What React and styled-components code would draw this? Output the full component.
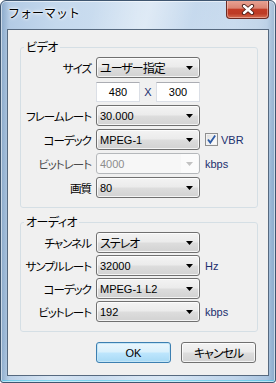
import React from "react";
import styled, { createGlobalStyle } from "styled-components";

const GlobalStyle = createGlobalStyle`
  html, body {
    margin: 0;
    padding: 0;
    background: #ffffff;
  }
  body {
    font-family: "Noto Sans CJK JP", "Liberation Sans", sans-serif;
  }
`;

const jp = `"Noto Sans CJK JP", "Liberation Sans", sans-serif`;
const latin = `"Liberation Sans", "Noto Sans CJK JP", sans-serif`;

function Arrow({ disabled }) {
  return (
    <svg width="7" height="4" viewBox="0 0 7 4">
      <path d="M0 0 H7 L3.5 4 Z" fill={disabled ? "#c2c2c2" : "#000"} />
    </svg>
  );
}

function Combo({ value, latinText, disabled }) {
  return (
    <ComboBox $disabled={disabled}>
      <ComboText $latin={latinText} $disabled={disabled}>
        {value}
      </ComboText>
      <ArrowSlot $disabled={disabled}>
        <Arrow disabled={disabled} />
      </ArrowSlot>
    </ComboBox>
  );
}

function App() {
  return (
    <>
      <GlobalStyle />
      <Frame>
        <TitleBar>
          <Title>フォーマット</Title>
          <CloseButton>
            <svg width="14" height="11" viewBox="0 0 14 11">
              <path
                d="M3 2 L11 9 M11 2 L3 9"
                stroke="#4a1d17"
                strokeWidth="4.2"
                strokeLinecap="round"
              />
              <path
                d="M3 2 L11 9 M11 2 L3 9"
                stroke="#ffffff"
                strokeWidth="2.4"
                strokeLinecap="round"
              />
            </svg>
          </CloseButton>
        </TitleBar>
        <Client>
          <Group>
            <Legend>ビデオ</Legend>
            <Rows>
              <Label>サイズ</Label>
              <Combo value="ユーザー指定" />
              <span />

              <span />
              <SizePair>
                <NumBox>480</NumBox>
                <Times>X</Times>
                <NumBox>300</NumBox>
              </SizePair>
              <span />

              <Label>フレームレート</Label>
              <Combo value="30.000" latinText />
              <span />

              <Label>コーデック</Label>
              <Combo value="MPEG-1" latinText />
              <Check>
                <CheckBox>
                  <svg width="11" height="11" viewBox="0 0 11 11">
                    <path
                      d="M2 5.5 L4.3 8.6 L9.2 1.6"
                      fill="none"
                      stroke="#2d5ba6"
                      strokeWidth="1.8"
                    />
                  </svg>
                </CheckBox>
                <Unit>VBR</Unit>
              </Check>

              <Label $dim>ビットレート</Label>
              <Combo value="4000" latinText disabled />
              <Unit>kbps</Unit>

              <Label>画質</Label>
              <Combo value="80" latinText />
              <span />
            </Rows>
          </Group>

          <Group $gapTop>
            <Legend>オーディオ</Legend>
            <Rows $tight>
              <Label>チャンネル</Label>
              <Combo value="ステレオ" />
              <span />

              <Label>サンプルレート</Label>
              <Combo value="32000" latinText />
              <Unit>Hz</Unit>

              <Label>コーデック</Label>
              <Combo value="MPEG-1 L2" latinText />
              <span />

              <Label>ビットレート</Label>
              <Combo value="192" latinText />
              <Unit>kbps</Unit>
            </Rows>
          </Group>

          <Buttons>
            <Button $default>OK</Button>
            <Button>キャンセル</Button>
          </Buttons>
        </Client>
      </Frame>
    </>
  );
}
export default App;

const Frame = styled.div`
  width: 276px;
  height: 383px;
  box-sizing: border-box;
  display: flex;
  flex-direction: column;
  padding: 0 6px 6px 6px;
  border: 1px solid #3f5670;
  border-radius: 6px 6px 3px 3px;
  box-shadow: inset 0 0 0 1px rgba(255, 255, 255, 0.55),
    inset 0 -2px 0 0 rgba(70, 200, 235, 0.6);
  background-image: linear-gradient(
      105deg,
      rgba(255, 255, 255, 0) 25%,
      rgba(255, 255, 255, 0.35) 40%,
      rgba(255, 255, 255, 0) 52%,
      rgba(255, 255, 255, 0.25) 70%,
      rgba(255, 255, 255, 0) 85%
    ),
    linear-gradient(
      90deg,
      #8aa9ca 0%,
      #b3cbe5 3%,
      #c4d8ed 20%,
      #cfe0f1 50%,
      #c0d5eb 85%,
      #abc5e0 97%,
      #8aa9ca 100%
    );
  overflow: hidden;
`;

const TitleBar = styled.div`
  height: 28px;
  display: flex;
  align-items: flex-start;
  justify-content: space-between;
`;

const Title = styled.div`
  margin: 4px 0 0 1px;
  font-family: ${jp};
  font-size: 12px;
  line-height: 16px;
  color: #000;
  text-shadow: 0 0 5px #fff, 0 0 3px #fff, 0 0 2px #fff;
`;

const CloseButton = styled.div`
  width: 43px;
  height: 19px;
  margin-top: -1px;
  box-sizing: border-box;
  display: flex;
  align-items: center;
  justify-content: center;
  border: 1px solid #6b2a22;
  border-top: none;
  border-radius: 0 0 4px 4px;
  background: linear-gradient(
    180deg,
    #e9a596 0%,
    #db8573 45%,
    #c23c26 52%,
    #bd3b25 75%,
    #d46c50 100%
  );
  box-shadow: inset 0 0 0 1px rgba(255, 220, 210, 0.45);
`;

const Client = styled.div`
  flex: 1;
  display: flex;
  flex-direction: column;
  border: 1px solid #56697f;
  background: #f0f0f0;
  padding: 10px 10px 0 12px;
`;

const Group = styled.fieldset`
  margin: ${(p) => (p.$gapTop ? "7px" : "0")} 0 0 0;
  padding: 3px 0 9px 0;
  border: 1px solid #d5dfe5;
  border-radius: 3px;
  min-width: 0;
`;

const Legend = styled.legend`
  margin-left: 3px;
  padding: 0 2px;
  font-family: ${jp};
  font-feature-settings: "palt";
  font-size: 12px;
  line-height: 14px;
  letter-spacing: -0.5px;
  color: #000;
`;

const Rows = styled.div`
  display: grid;
  grid-template-columns: 70px 104px auto;
  grid-auto-rows: 21px;
  column-gap: 5px;
  row-gap: ${(p) => (p.$tight ? "2px" : "3px")};
  align-items: center;
`;

const Label = styled.div`
  text-align: right;
  font-family: ${jp};
  font-feature-settings: "palt";
  font-size: 11.5px;
  line-height: 16px;
  letter-spacing: -1px;
  white-space: nowrap;
  color: ${(p) => (p.$dim ? "#4a4a4a" : "#000")};
`;

const ComboBox = styled.div`
  height: 21px;
  box-sizing: border-box;
  display: flex;
  align-items: center;
  border: 1px solid ${(p) => (p.$disabled ? "#b5b8bb" : "#707070")};
  border-radius: 3px;
  background: ${(p) =>
    p.$disabled
      ? "#f7f7f7"
      : "linear-gradient(180deg, #f3f3f3 0%, #ebebeb 48%, #dddddd 52%, #d2d2d2 100%)"};
  box-shadow: ${(p) =>
    p.$disabled ? "none" : "inset 0 0 0 1px rgba(255,255,255,0.75)"};
`;

const ComboText = styled.div`
  flex: 1;
  padding-left: 3px;
  font-family: ${(p) => (p.$latin ? latin : jp)};
  font-feature-settings: "palt";
  font-size: ${(p) => (p.$latin ? "11px" : "12px")};
  letter-spacing: ${(p) => (p.$latin ? "0" : "-1px")};
  line-height: 16px;
  white-space: nowrap;
  color: ${(p) => (p.$disabled ? "#8d8d8d" : "#000")};
`;

const ArrowSlot = styled.div`
  width: 17px;
  height: 100%;
  display: flex;
  align-items: center;
  justify-content: center;
  margin-right: 1px;
  background: ${(p) => (p.$disabled ? "#fbfbfb" : "transparent")};
`;

const SizePair = styled.div`
  display: flex;
  align-items: center;
  justify-content: space-between;
`;

const NumBox = styled.div`
  width: 44px;
  height: 20px;
  box-sizing: border-box;
  display: flex;
  align-items: center;
  justify-content: center;
  background: #fff;
  border: 1px solid #dbdfe6;
  border-top-color: #abadb3;
  font-family: ${latin};
  font-size: 11px;
  color: #000;
`;

const Times = styled.span`
  font-family: ${latin};
  font-size: 11px;
  color: #1c2f6e;
`;

const Check = styled.div`
  display: flex;
  align-items: center;
  gap: 3px;
`;

const CheckBox = styled.div`
  width: 13px;
  height: 13px;
  box-sizing: border-box;
  display: flex;
  align-items: center;
  justify-content: center;
  border: 1px solid #8f8f8f;
  background: linear-gradient(135deg, #dcdcdc 0%, #f4f4f4 60%, #ffffff 100%);
  box-shadow: inset 0 0 0 1px #f2f2f2;
`;

const Unit = styled.span`
  font-family: ${latin};
  font-size: 11px;
  color: #1c2f6e;
  white-space: nowrap;
`;

const Buttons = styled.div`
  display: flex;
  justify-content: flex-end;
  gap: 10px;
  margin: 10px 2px 0 0;
`;

const Button = styled.div`
  width: 75px;
  height: 21px;
  box-sizing: border-box;
  display: flex;
  align-items: center;
  justify-content: center;
  border: 1px solid ${(p) => (p.$default ? "#3c7fb1" : "#707070")};
  border-radius: 3px;
  background: ${(p) =>
    p.$default
      ? "linear-gradient(180deg, #eaf6fd 0%, #d9f0fc 48%, #bee6fd 52%, #a7d9f5 100%)"
      : "linear-gradient(180deg, #f3f3f3 0%, #ebebeb 48%, #dddddd 52%, #d2d2d2 100%)"};
  box-shadow: ${(p) =>
    p.$default
      ? "inset 0 0 0 1px #c4e5f6"
      : "inset 0 0 0 1px rgba(255,255,255,0.75)"};
  font-family: ${(p) => (p.$default ? latin : jp)};
  font-feature-settings: "palt";
  font-size: ${(p) => (p.$default ? "11px" : "12px")};
  letter-spacing: ${(p) => (p.$default ? "0" : "-1px")};
  color: #000;
`;
